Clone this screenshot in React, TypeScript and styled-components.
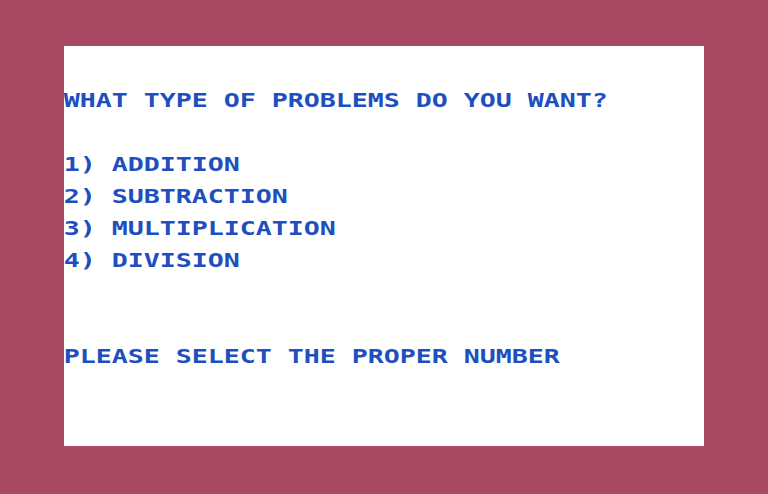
import React from "react";
import styled, { createGlobalStyle } from "styled-components";

const BORDER = "#a94863";
const PAPER = "#ffffff";
const INK = "#1d4fbe";

const Global = createGlobalStyle`
  html, body {
    margin: 0;
    padding: 0;
    background: ${BORDER};
    width: 100%;
    height: 100%;
    overflow: hidden;
  }
  #root {
    width: 768px;
    height: 494px;
  }
`;

const Frame = styled.div`
  width: 768px;
  height: 494px;
  box-sizing: border-box;
  padding: 46px 64px 48px;
  background: ${BORDER};
`;

const Screen = styled.div`
  width: 640px;
  height: 400px;
  background: ${PAPER};
  display: flex;
  flex-direction: column;
  overflow: hidden;
`;

const Row = styled.div`
  height: 16px;
  display: flex;
  flex: none;
`;

const Cell = styled.span`
  width: 16px;
  height: 16px;
  flex: none;
  display: flex;
  justify-content: center;
  overflow: visible;
`;

const Glyph = styled.span`
  display: block;
  font-family: "DejaVu Sans Mono", "Liberation Mono", monospace;
  font-weight: 700;
  font-size: 19px;
  line-height: 16px;
  color: ${INK};
  transform: translateY(-2px) scaleX(1.4);
  transform-origin: center;
  white-space: pre;
`;

const lines: string[] = [
  "",
  "",
  "",
  "WHAT TYPE OF PROBLEMS DO YOU WANT?",
  "",
  "",
  "",
  "1) ADDITION",
  "",
  "2) SUBTRACTION",
  "",
  "3) MULTIPLICATION",
  "",
  "4) DIVISION",
  "",
  "",
  "",
  "",
  "",
  "PLEASE SELECT THE PROPER NUMBER",
  "",
  "",
  "",
  "",
  "",
];

function TextRow({ text }: { text: string }) {
  return (
    <Row>
      {Array.from(text).map((ch, i) => (
        <Cell key={i}>
          <Glyph>{ch}</Glyph>
        </Cell>
      ))}
    </Row>
  );
}

export default function App() {
  return (
    <>
      <Global />
      <Frame>
        <Screen>
          {lines.map((t, i) => (
            <TextRow key={i} text={t} />
          ))}
        </Screen>
      </Frame>
    </>
  );
}
